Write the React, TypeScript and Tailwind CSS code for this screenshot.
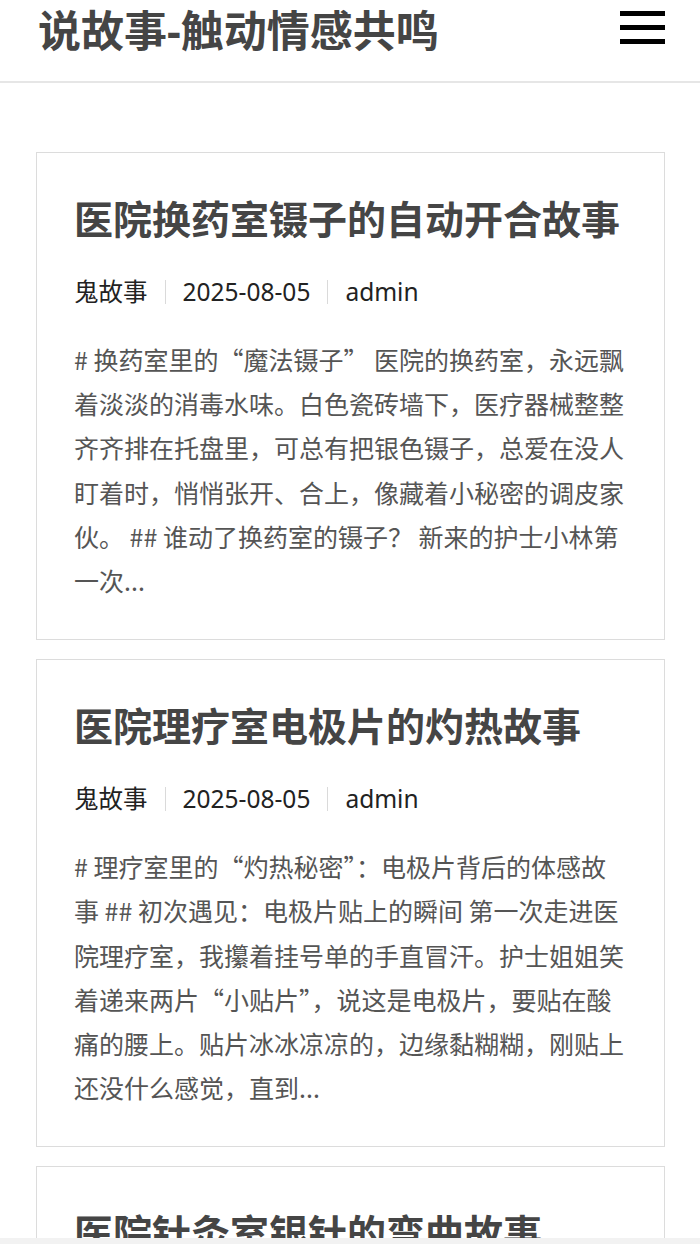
import React from 'react';

const posts = [
  {
    id: 1,
    title: '医院换药室镊子的自动开合故事',
    category: '鬼故事',
    date: '2025-08-05',
    author: 'admin',
    excerpt: [
      '# 换药室里的“魔法镊子” 医院的换药室，永远飘',
      '着淡淡的消毒水味。白色瓷砖墙下，医疗器械整整',
      '齐齐排在托盘里，可总有把银色镊子，总爱在没人',
      '盯着时，悄悄张开、合上，像藏着小秘密的调皮家',
      '伙。 ## 谁动了换药室的镊子？ 新来的护士小林第',
      '一次...',
    ],
  },
  {
    id: 2,
    title: '医院理疗室电极片的灼热故事',
    category: '鬼故事',
    date: '2025-08-05',
    author: 'admin',
    excerpt: [
      '# 理疗室里的“灼热秘密”：电极片背后的体感故',
      '事 ## 初次遇见：电极片贴上的瞬间 第一次走进医',
      '院理疗室，我攥着挂号单的手直冒汗。护士姐姐笑',
      '着递来两片“小贴片”，说这是电极片，要贴在酸',
      '痛的腰上。贴片冰冰凉凉的，边缘黏糊糊，刚贴上',
      '还没什么感觉，直到...',
    ],
  },
  {
    id: 3,
    title: '医院针灸室银针的弯曲故事',
    category: '鬼故事',
    date: '2025-08-05',
    author: 'admin',
    excerpt: ['# 针灸室里的银针 医院针灸室的银针，细细长长，', '闪着微光...'],
  },
];

const latin = { fontFamily: '"Noto Sans", "Noto Sans CJK SC", sans-serif' };
const cjk = { fontFamily: '"Noto Sans CJK SC", "Noto Sans", sans-serif' };

const App: React.FC = () => {
  return (
    <div className="min-h-screen bg-white" style={latin}>
      <header className="flex items-start justify-between h-[83px] pl-[38px] pr-[35px] border-b-2 border-[#e6e6e6]">
        <h1 className="text-[43px] leading-[62px] font-bold text-[#454545]">说故事-触动情感共鸣</h1>
        <button className="mt-[11px] flex flex-col gap-[9px] w-[45px]">
          <span className="block h-[5px] bg-black" />
          <span className="block h-[5px] bg-black" />
          <span className="block h-[5px] bg-black" />
        </button>
      </header>

      <main className="pt-[69px] pl-[36px] pr-[35px] space-y-[19px]">
        {posts.map((post) => (
          <article key={post.id} className="border border-[#dcdcdc] pt-[37px] pb-[37px] pl-[37px] pr-[20px]">
            <h2 className="text-[39px] leading-[58px] font-bold text-[#454545]">{post.title}</h2>
            <div className="mt-[22px] flex items-center text-[24.5px] leading-[44px] text-[#222]">
              <span>{post.category}</span>
              <span className="mx-[17px] w-px h-[24px] bg-[#dadada]" />
              <span>{post.date}</span>
              <span className="mx-[17px] w-px h-[24px] bg-[#dadada]" />
              <span>{post.author}</span>
            </div>
            <p
              className="mt-[23px] text-[25px] leading-[44.2px] text-[#555] whitespace-nowrap"
              style={cjk}
            >
              {post.excerpt.map((line, i) => (
                <React.Fragment key={i}>
                  {i > 0 && <br />}
                  {line}
                </React.Fragment>
              ))}
            </p>
          </article>
        ))}
      </main>

      <div className="fixed bottom-0 left-0 right-0 h-[6px] bg-[#f2f2f2]" />
    </div>
  );
};

export default App;
